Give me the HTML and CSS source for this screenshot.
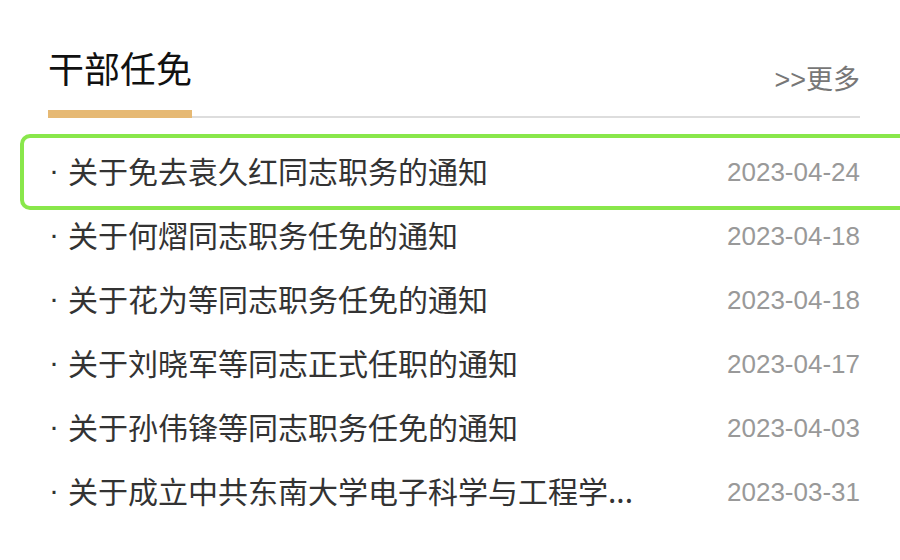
FILE: index.html
```html
<!DOCTYPE html>
<html lang="zh-CN">
<head>
<meta charset="utf-8">
<title>干部任免</title>
<link rel="stylesheet" href="styles.css">
</head>
<body>
<div class="panel">
  <div class="panel-head">
    <h2 class="panel-title">干部任免</h2>
    <a class="more" href="#">&gt;&gt;更多</a>
  </div>
  <ul class="news">
    <li class="item focused">
      <a class="item-link" href="#"><span class="dot">·</span>关于免去袁久红同志职务的通知</a>
      <span class="date">2023-04-24</span>
    </li>
    <li class="item">
      <a class="item-link" href="#"><span class="dot">·</span>关于何熠同志职务任免的通知</a>
      <span class="date">2023-04-18</span>
    </li>
    <li class="item">
      <a class="item-link" href="#"><span class="dot">·</span>关于花为等同志职务任免的通知</a>
      <span class="date">2023-04-18</span>
    </li>
    <li class="item">
      <a class="item-link" href="#"><span class="dot">·</span>关于刘晓军等同志正式任职的通知</a>
      <span class="date">2023-04-17</span>
    </li>
    <li class="item">
      <a class="item-link" href="#"><span class="dot">·</span>关于孙伟锋等同志职务任免的通知</a>
      <span class="date">2023-04-03</span>
    </li>
    <li class="item">
      <a class="item-link" href="#"><span class="dot">·</span>关于成立中共东南大学电子科学与工程学...</a>
      <span class="date">2023-03-31</span>
    </li>
  </ul>
</div>
</body>
</html>
```

FILE: styles.css
```css
html, body {
  margin: 0;
  padding: 0;
  background: #ffffff;
  overflow: hidden;
}

body {
  width: 900px;
  height: 560px;
  font-family: "Noto Sans CJK SC", "Noto Sans", sans-serif;
}

.panel {
  padding: 49px 40px 0 48px;
  width: 812px;
}

.panel-head {
  display: flex;
  justify-content: space-between;
  align-items: flex-end;
  border-bottom: 2px solid #dddddd;
}

.panel-title {
  margin: 0 0 -2px 0;
  font-size: 36px;
  line-height: 36px;
  font-weight: normal;
  color: #111111;
  padding: 0 0 25px 0;
  width: 144px;
  border-bottom: 8px solid #e6b974;
}

.more {
  font-family: "Liberation Sans", "Noto Sans CJK SC", sans-serif;
  font-size: 27px;
  line-height: 27px;
  color: #777777;
  text-decoration: none;
  padding-bottom: 22px;
}

.news {
  list-style: none;
  margin: 22px 0 0 0;
  padding: 0;
}

.item {
  position: relative;
  height: 64px;
  display: flex;
  justify-content: space-between;
  align-items: center;
}

.item.focused::after {
  content: "";
  position: absolute;
  top: -6px;
  bottom: -6px;
  left: -28px;
  right: -60px;
  border: 4px solid #89e74b;
  border-radius: 10px;
}

.item-link {
  font-size: 30px;
  line-height: 36px;
  padding-bottom: 4px;
  color: #333333;
  text-decoration: none;
  display: flex;
  align-items: center;
}

.dot {
  display: inline-block;
  width: 20px;
  font-family: "Liberation Sans", sans-serif;
  font-size: 30px;
  color: #333333;
  padding-left: 1px;
  box-sizing: border-box;
}

.date {
  font-family: "Liberation Sans", Arial, sans-serif;
  font-size: 26px;
  color: #999999;
}
```
